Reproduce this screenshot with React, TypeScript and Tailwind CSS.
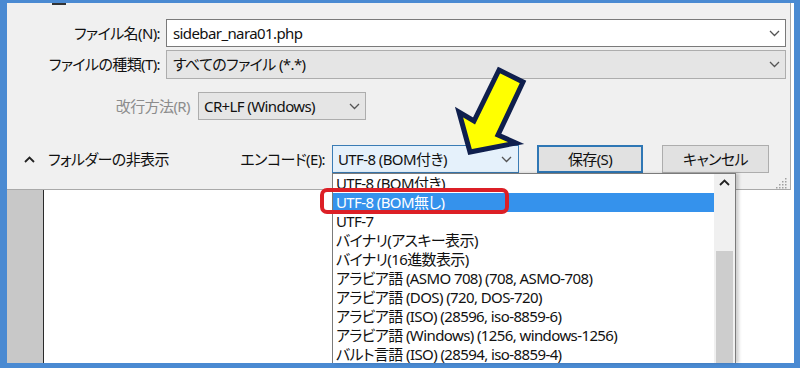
import React from 'react';

const items = [
  'UTF-8 (BOM付き)',
  'UTF-8 (BOM無し)',
  'UTF-7',
  'バイナリ(アスキー表示)',
  'バイナリ(16進数表示)',
  'アラビア語 (ASMO 708) (708, ASMO-708)',
  'アラビア語 (DOS) (720, DOS-720)',
  'アラビア語 (ISO) (28596, iso-8859-6)',
  'アラビア語 (Windows) (1256, windows-1256)',
  'バルト言語 (ISO) (28594, iso-8859-4)',
];

function Chevron({ up = false }: { up?: boolean }) {
  return (
    <svg width="11" height="7" viewBox="0 0 11 7" className="shrink-0">
      <polyline
        points={up ? '1,6 5.5,1.5 10,6' : '1,1 5.5,5.5 10,1'}
        fill="none"
        stroke={up ? '#222' : '#555'}
        strokeWidth={up ? 1.8 : 1.3}
      />
    </svg>
  );
}

export default function App() {
  return (
    <div className="relative h-[368px] w-[800px] overflow-hidden bg-[#4a8ad2] pt-[3px] pl-[7px] pr-[6px] pb-[5px] text-[15px] tracking-[-0.6px] text-[#111] font-['Noto_Sans','Noto_Sans_CJK_JP',sans-serif] [font-feature-settings:'palt']">
      <div className="flex h-full flex-col bg-white">
        {/* Save dialog */}
        <div className="mr-[3px] flex h-[187px] flex-col border-b border-r border-[#a9a9a9] bg-[#f0f0f0] pt-[16px] pr-[4px]">
          <div className="flex h-[28px] items-center">
            <div className="w-[153px] whitespace-nowrap text-right">ファイル名(N):</div>
            <div className="ml-[6px] flex h-full flex-1 items-center justify-between border border-[#7a7a7a] bg-white pl-[6px] pr-[5px]">
              <span>sidebar_nara01.php</span>
              <Chevron />
            </div>
          </div>
          <div className="mt-[3px] flex h-[29px] items-center">
            <div className="w-[153px] whitespace-nowrap text-right">ファイルの種類(T):</div>
            <div className="ml-[6px] flex h-full flex-1 items-center justify-between border border-[#adadad] bg-[#e5e5e5] pl-[6px] pr-[5px]">
              <span>すべてのファイル (*.*)</span>
              <Chevron />
            </div>
          </div>
          <div className="mt-[13px] flex h-[28px] items-center">
            <div className="w-[183px] whitespace-nowrap text-right text-[#8c8c8c]">改行方法(R)</div>
            <div className="ml-[8px] flex h-full w-[168px] items-center justify-between border border-[#adadad] bg-[#e5e5e5] pl-[5px] pr-[5px]">
              <span>CR+LF (Windows)</span>
              <Chevron />
            </div>
          </div>
          <div className="mt-[25px] flex h-[28px] items-center">
            <div className="flex w-[243px] items-center pl-[17px]">
              <Chevron up />
              <span className="ml-[13px] whitespace-nowrap">フォルダーの非表示</span>
            </div>
            <div className="w-[75px] whitespace-nowrap text-right [direction:rtl]">
              <span className="[direction:ltr] [unicode-bidi:isolate]">エンコード(E):</span>
            </div>
            <div className="ml-[7px] flex h-full w-[187px] items-center justify-between border border-[#3a7cb5] bg-[#e5f1fb] pl-[5px] pr-[6px]">
              <span>UTF-8 (BOM付き)</span>
              <Chevron />
            </div>
            <button className="ml-[18px] h-full w-[106px] border-2 border-[#2f77b5] bg-[#e1e1e1]">保存(S)</button>
            <button className="ml-[19px] h-full w-[107px] border border-[#adadad] bg-[#e1e1e1]">キャンセル</button>
          </div>
        </div>

        {/* Window behind the dialog */}
        <div className="flex flex-1">
          <div className="w-[37px] border-r border-[#2b2b2b] bg-[#c8c8c8]" />
          <div className="flex-1 bg-white" />
        </div>
      </div>

      {/* cut-off control above */}
      <div className="absolute left-[52px] top-[3px] h-[2px] w-[14px] bg-[#333]" />

      {/* resize grip */}
      <svg className="absolute left-[775px] top-[177px]" width="12" height="12" viewBox="0 0 12 12">
        {[
          [10, 2],
          [7, 5],
          [10, 5],
          [4, 8],
          [7, 8],
          [10, 8],
          [1, 11],
          [4, 11],
          [7, 11],
          [10, 11],
        ].map(([x, y], i) => (
          <rect key={i} x={x} y={y - 1} width="1.5" height="1.5" fill="#a0a0a0" />
        ))}
      </svg>

      {/* encoding dropdown list */}
      <div className="absolute left-[332px] top-[173px] flex h-[190px] w-[404px] overflow-hidden border-x border-t border-[#7b7b7b] bg-white shadow-[3px_0_3px_rgba(0,0,0,0.18)]">
        <div className="flex-1">
          {items.map((item, i) => (
            <div
              key={item}
              className={
                i === 1
                  ? 'h-[19px] whitespace-nowrap bg-[#3592ec] pl-[3px] leading-[19px] text-white'
                  : 'h-[19px] whitespace-nowrap pl-[3px] leading-[19px]'
              }
            >
              {item}
            </div>
          ))}
        </div>
        <div className="flex w-[21px] flex-col items-center bg-[#f0f0f0]">
          <div className="flex h-[17px] items-center">
            <Chevron up />
          </div>
          <div className="mt-[60px] w-[17px] flex-1 bg-[#cdcdcd]" />
        </div>
      </div>

      {/* red highlight */}
      <div className="absolute left-[320px] top-[188px] h-[26px] w-[189px] rounded-[7px] border-4 border-[#dc1f26]" />

      {/* yellow arrow */}
      <svg className="pointer-events-none absolute left-0 top-0" width="800" height="368" viewBox="0 0 800 368">
        <polygon
          points="499,70 523,82 498,135 516,143 470,152 459,112 474,121"
          fill="#ffff00"
          stroke="#0f1f4d"
          strokeWidth="5"
          strokeLinejoin="miter"
        />
      </svg>
    </div>
  );
}
